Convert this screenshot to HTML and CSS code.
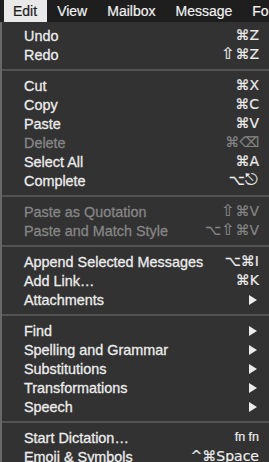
FILE: index.html
```html
<!DOCTYPE html>
<html lang="en">
<head>
    <meta charset="UTF-8">
    <meta name="viewport" content="width=device-width, initial-scale=1.0">
    <title>Edit Menu</title>
    <link rel="stylesheet" href="styles.css">
</head>
<body>
    <div class="menubar">
        <span class="bar-item active">Edit</span>
        <span class="bar-item">View</span>
        <span class="bar-item">Mailbox</span>
        <span class="bar-item">Message</span>
        <span class="bar-item">Format</span>
    </div>
    <div class="menu">
        <div class="item"><span>Undo</span><span class="key">⌘Z</span></div>
        <div class="item"><span>Redo</span><span class="key"><span class="sym">⇧</span>⌘Z</span></div>
        <div class="sep"></div>
        <div class="item"><span>Cut</span><span class="key">⌘X</span></div>
        <div class="item"><span>Copy</span><span class="key">⌘C</span></div>
        <div class="item"><span>Paste</span><span class="key">⌘V</span></div>
        <div class="item disabled"><span>Delete</span><span class="key">⌘⌫</span></div>
        <div class="item"><span>Select All</span><span class="key">⌘A</span></div>
        <div class="item"><span>Complete</span><span class="key">⌥<span class="sym">⎋</span></span></div>
        <div class="sep"></div>
        <div class="item disabled"><span>Paste as Quotation</span><span class="key"><span class="sym">⇧</span>⌘V</span></div>
        <div class="item disabled"><span>Paste and Match Style</span><span class="key">⌥<span class="sym">⇧</span>⌘V</span></div>
        <div class="sep"></div>
        <div class="item"><span>Append Selected Messages</span><span class="key">⌥⌘I</span></div>
        <div class="item"><span>Add Link…</span><span class="key">⌘K</span></div>
        <div class="item"><span>Attachments</span><span class="arrow"></span></div>
        <div class="sep"></div>
        <div class="item"><span>Find</span><span class="arrow"></span></div>
        <div class="item"><span>Spelling and Grammar</span><span class="arrow"></span></div>
        <div class="item"><span>Substitutions</span><span class="arrow"></span></div>
        <div class="item"><span>Transformations</span><span class="arrow"></span></div>
        <div class="item"><span>Speech</span><span class="arrow"></span></div>
        <div class="sep"></div>
        <div class="item"><span>Start Dictation…</span><span class="key small">fn fn</span></div>
        <div class="item"><span>Emoji &amp; Symbols</span><span class="key">^⌘Space</span></div>
    </div>
</body>
</html>
```

FILE: styles.css
```css
html, body {
    margin: 0;
    height: 100%;
    overflow: hidden;
}
body {
    font-family: "Liberation Sans", "DejaVu Sans", sans-serif;
    background-color: #323232;
    color: #ececec;
}
.menubar {
    display: flex;
    height: 22px;
    background-color: #1e1e1e;
    white-space: nowrap;
    padding-left: 4px;
}
.bar-item {
    font-size: 14px;
    line-height: 22px;
    padding: 0 10px;
    color: #f2f2f2;
    -webkit-text-stroke: 0.2px currentColor;
}
.active {
    background-color: #e9e9e9;
    color: #1c1c1c;
    padding: 0 10px 0 9px;
}
.menu {
    border-left: 2px solid #686868;
    padding: 4px 10px 0 22px;
    height: 100%;
}
.item {
    display: flex;
    justify-content: space-between;
    align-items: center;
    height: 19px;
    font-size: 14.4px;
    white-space: nowrap;
    -webkit-text-stroke: 0.3px currentColor;
}
.disabled {
    color: #858585;
}
.key {
    font-family: "DejaVu Sans", sans-serif;
    font-size: 14px;
    line-height: 19px;
    -webkit-text-stroke: 0.2px currentColor;
}
.key .sym {
    font-size: 16px;
    line-height: 1;
    margin-right: 1px;
}
.key.small {
    font-family: "Liberation Sans", sans-serif;
    font-size: 12.5px;
}
.arrow {
    width: 0;
    height: 0;
    border-top: 5px solid transparent;
    border-bottom: 5px solid transparent;
    border-left: 8px solid #ececec;
    margin-right: 2px;
}
.sep {
    height: 2px;
    background-color: #535353;
    margin: 5px -10px 5px -22px;
}
```
